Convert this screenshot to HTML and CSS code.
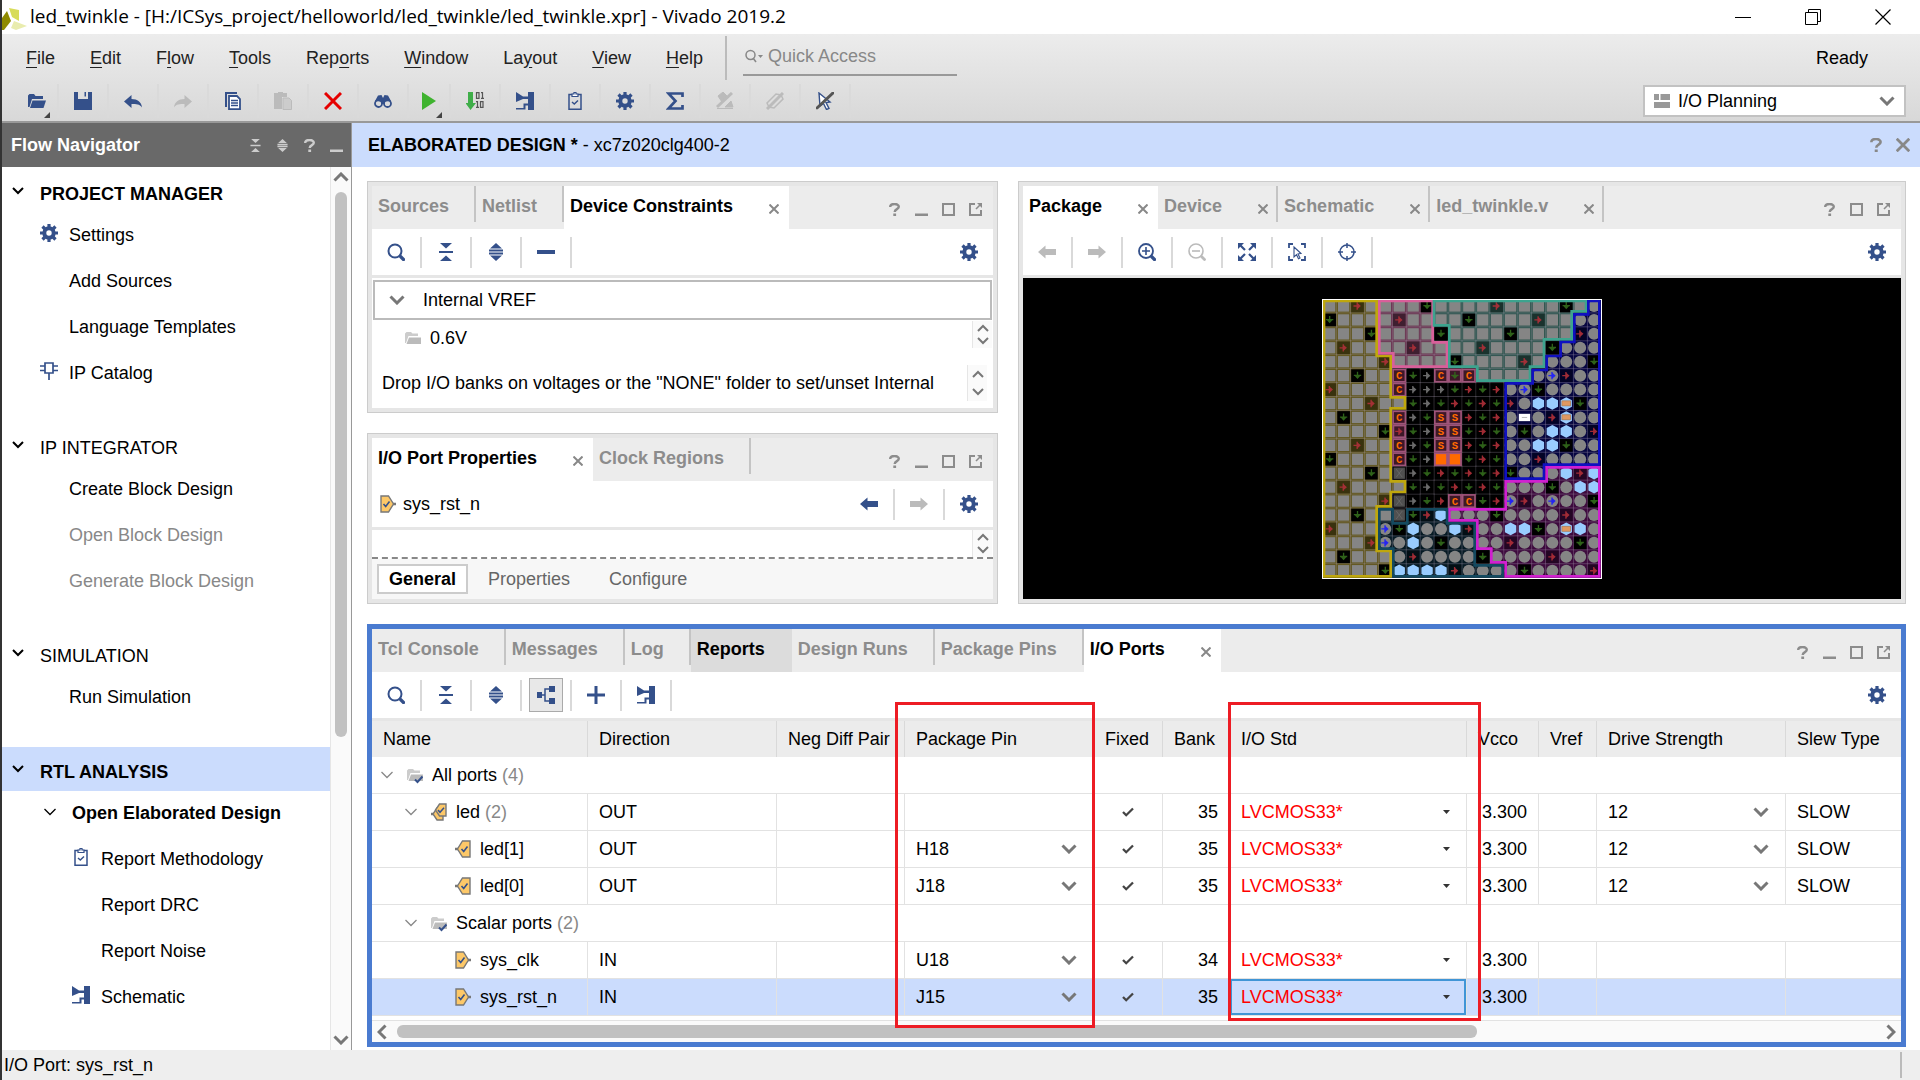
FILE: index.html
```html
<!DOCTYPE html>
<html lang="en">
<head>
    <meta charset="UTF-8">
    <meta name="viewport" content="width=device-width, initial-scale=1.0">
    <title>led_twinkle - Vivado 2019.2</title>
    <link rel="stylesheet" href="styles.css">
</head>
<body>
    <!-- icon sprite -->
    <svg class="sprite" aria-hidden="true">
        <symbol id="gear" viewBox="0 0 18 18"><circle cx="9" cy="9" r="4.7" fill="none" stroke="currentColor" stroke-width="4"/><path d="M9 0v4M9 14v4M0 9h4M14 9h4M2.5 2.5l3 3M12.5 12.5l3 3M2.5 15.5l3-3M12.5 5.5l3-3" stroke="currentColor" stroke-width="3.2"/></symbol>
        <symbol id="search" viewBox="0 0 18 18"><circle cx="8" cy="8" r="6.5" fill="none" stroke="currentColor" stroke-width="2"/><path d="M13.5 13.5l3 3" stroke="currentColor" stroke-width="3.2" stroke-linecap="round"/></symbol>
        <symbol id="collapse" viewBox="0 0 18 18"><path d="M3 0h12L9 5.5zM3 18h12l-6-5.5zM2 8h14v2H2z" fill="currentColor"/></symbol>
        <symbol id="expand" viewBox="0 0 18 18"><path d="M3 5.5h12L9 0zM3 12.5h12L9 18zM2 6.5h14v2H2zM2 9.5h14v2H2z" fill="currentColor"/></symbol>
        <symbol id="minus" viewBox="0 0 18 18"><path d="M0 7h18v4H0z" fill="currentColor"/></symbol>
        <symbol id="plus" viewBox="0 0 18 18"><path d="M7.500 0h3v7.500H18v3h-7.500V18h-3v-7.500H0v-3h7.500z" fill="currentColor"/></symbol>
        <symbol id="help" viewBox="0 0 13 13"><path d="M2.200 4C2.200 0 10.800 0 10.800 3.800 10.800 6.400 6.700 5.800 6.700 9M5.300 11.800h2.800" fill="none" stroke="currentColor" stroke-width="2.400"/></symbol>
        <symbol id="mini" viewBox="0 0 13 13"><path d="M0 10.500h13v2.500H0z" fill="currentColor"/></symbol>
        <symbol id="maxi" viewBox="0 0 13 13"><path d="M1 1h11v11H1z" fill="none" stroke="currentColor" stroke-width="2"/></symbol>
        <symbol id="float" viewBox="0 0 13 13"><path d="M6 1H1v11h11V7" fill="none" stroke="currentColor" stroke-width="2"/><path d="M7 6l4-4" stroke="currentColor" stroke-width="1.600"/><path d="M8 0h5v5z" fill="currentColor"/></symbol>
        <symbol id="close" viewBox="0 0 10 10"><path d="M.500 .500l9 9M9.500 .500l-9 9" stroke="currentColor" stroke-width="2"/></symbol>
        <symbol id="chev" viewBox="0 0 12 8"><path d="M1 1l5 5 5-5" fill="none" stroke="currentColor" stroke-width="2"/></symbol>
        <symbol id="chevBold" viewBox="0 0 16 10"><path d="M1.500 1.500L8 8l6.500-6.500" fill="none" stroke="currentColor" stroke-width="3"/></symbol>
        <symbol id="chevThin" viewBox="0 0 12 8"><path d="M.500 1L6 6.500 11.500 1" fill="none" stroke="currentColor" stroke-width="1.300"/></symbol>
        <symbol id="check" viewBox="0 0 12 10"><path d="M1 5l3.200 3.200L11 1.500" fill="none" stroke="currentColor" stroke-width="2.300"/></symbol>
        <symbol id="tri" viewBox="0 0 7 4"><path d="M0 0h7L3.500 4z" fill="currentColor"/></symbol>
        <symbol id="open" viewBox="0 0 18 18"><path d="M0 15V3.500L1.500 2H6l1.500 2H15v3H4L1.500 15z" fill="currentColor"/><path d="M4.500 8.500H18L15.500 16H2z" fill="currentColor"/></symbol>
        <symbol id="save" viewBox="0 0 18 18"><path d="M0 0h4v7h10V0h4v18H0zM10.500 0H12v4.500h-1.500z" fill="currentColor"/></symbol>
        <symbol id="undo" viewBox="0 0 18 18"><path d="M0 9.500L7.500 3v4c6 0 10 3 10.500 8.500-2.500-3.500-5.500-3.500-10.500-3.500v4z" fill="currentColor"/></symbol>
        <symbol id="redo" viewBox="0 0 18 18"><path d="M18 9.500L10.500 3v4C4.500 7 .500 10 0 15.500 2.500 12 5.500 12 10.500 12v4z" fill="currentColor"/></symbol>
        <symbol id="copy" viewBox="0 0 18 18"><path d="M1 0h12v2H3v13H1z" fill="currentColor"/><path d="M5 4h8l3 3v10.200H5z" fill="#fff" stroke="currentColor" stroke-width="1.800"/><path d="M7 8.500h7M7 11h7M7 13.500h7" stroke="currentColor" stroke-width="1.300"/></symbol>
        <symbol id="paste" viewBox="0 0 18 18"><path d="M0 1h4V0h5v1h4v4H8v12H0z" fill="currentColor"/><path d="M9 6h6l2.500 2.500v9H9z" fill="#ccc" stroke="currentColor"/></symbol>
        <symbol id="delete" viewBox="0 0 18 18"><path d="M1 1l16 16M17 1L1 17" stroke="#e60000" stroke-width="3"/></symbol>
        <symbol id="find" viewBox="0 0 18 18"><g fill="none" stroke="currentColor" stroke-width="1.800"><circle cx="4.500" cy="11.500" r="3.500"/><circle cx="13.500" cy="11.500" r="3.500"/></g><path d="M1 9l3-5.500 3.500-.500L9 6l1.500-3 3.500.500L17 9l-6 .500-.500 2.500h-3L7 9.500z" fill="currentColor"/></symbol>
        <symbol id="run" viewBox="0 0 18 18"><path d="M2 0l14 9L2 18z" fill="#3fb32f"/></symbol>
        <symbol id="bits" viewBox="0 0 18 18"><path d="M2 0h5v11h3L4.500 18-.500 11H2z" fill="#3fae49"/><path d="M10.500.700h2.500v5.600h-2.500zM15 .700h1.500v5.600M15 6.300h3M10 9.700h1.500v5.600M10 15.300h3M14.500 9.700H17v5.600h-2.500z" fill="none" stroke="#555" stroke-width="1.200"/></symbol>
        <symbol id="schem" viewBox="0 0 18 18"><path d="M0 0l7 4.500h5V0h6v18h-6v-4.500H9.500V17.500H0V16h7.500v-4.500H12V7H7L0 10z" fill="currentColor"/></symbol>
        <symbol id="clip" viewBox="0 0 18 18"><path d="M3 2.500h12v14.700H3z" fill="none" stroke="currentColor" stroke-width="1.500"/><path d="M6 3.500V2h2V.500h2V2h2v2.500H6z" fill="#fff" stroke="currentColor" stroke-width="1.200"/><path d="M6 10l2.300 2L12 8.500" fill="none" stroke="currentColor" stroke-width="1.500"/></symbol>
        <symbol id="sigma" viewBox="0 0 18 18"><path d="M16.500 5V1.500H2.500L9.500 9l-7 7.500h14V13" fill="none" stroke="currentColor" stroke-width="2.700"/></symbol>
        <symbol id="noMark" viewBox="0 0 18 18"><path d="M1 16.500h16M2 4l5-4 5 5-6 5zM9 15l6-6 2 6z" fill="currentColor" stroke="currentColor"/><path d="M1 15L16 1" stroke="currentColor" stroke-width="3"/></symbol>
        <symbol id="noRoute" viewBox="0 0 18 18"><path d="M1 11L10 2l5 1 2 4-9 9-5-1z" fill="none" stroke="currentColor" stroke-width="1.500"/><path d="M1 17L17 1M6 12l6-6" stroke="currentColor" stroke-width="3"/></symbol>
        <symbol id="noSelect" viewBox="0 0 18 18"><path d="M3 1l11 9-4 .500 3 6-2.500 1-3-6L4 14z" fill="#fff" stroke="#34508a" stroke-width="1.400"/><path d="M1 16L17 1" stroke="#555" stroke-width="3" stroke-linecap="round"/></symbol>
        <symbol id="ip" viewBox="0 0 18 18"><path d="M5 1h8v10H5zM0 4h5M0 8.500h5M13 4h5M13 8.500h5M9 11v7" fill="none" stroke="currentColor" stroke-width="1.700"/></symbol>
        <symbol id="tree" viewBox="0 0 18 18"><path d="M0 6h5v6H0zM12 0h6v6h-6zM12 12h6v6h-6z" fill="currentColor"/><path d="M5 9h3M12 3H8v12h4" fill="none" stroke="currentColor" stroke-width="1.500"/></symbol>
        <symbol id="back" viewBox="0 0 18 18"><path d="M0 9l7.500-6.500V6H18v6H7.500v3.500z" fill="currentColor"/></symbol>
        <symbol id="next" viewBox="0 0 18 18"><path d="M18 9l-7.500-6.500V6H0v6h10.500v3.500z" fill="currentColor"/></symbol>
        <symbol id="zoomIn" viewBox="0 0 18 18"><circle cx="8" cy="8" r="7" fill="none" stroke="currentColor" stroke-width="1.800"/><path d="M4 8h8M8 4v8" stroke="currentColor" stroke-width="1.600"/><path d="M13.500 13.500l3 3" stroke="currentColor" stroke-width="3.200" stroke-linecap="round"/></symbol>
        <symbol id="zoomOut" viewBox="0 0 18 18"><circle cx="8" cy="8" r="7" fill="none" stroke="currentColor" stroke-width="1.600"/><path d="M4 8h8" stroke="currentColor" stroke-width="1.600"/><path d="M13.500 13.500l3 3" stroke="currentColor" stroke-width="2.800" stroke-linecap="round"/></symbol>
        <symbol id="fit" viewBox="0 0 18 18"><path d="M0 0h6L0 6zM18 0v6l-6-6zM0 18v-6l6 6zM18 18h-6l6-6z" fill="currentColor"/><path d="M2 2l5 5M16 2l-5 5M2 16l5-5M16 16l-5-5" stroke="currentColor" stroke-width="2.200"/></symbol>
        <symbol id="fitSel" viewBox="0 0 18 18"><path d="M1 5V1h4M13 1h4v4M17 13v4h-4M5 17H1v-4" fill="none" stroke="currentColor" stroke-width="1.800"/><path d="M6 4l7 6.500-3 .500 2 4-1.500.700-2-4L6 14z" fill="#fff" stroke="currentColor" stroke-width="1.100"/></symbol>
        <symbol id="target" viewBox="0 0 18 18"><circle cx="9" cy="9" r="7" fill="none" stroke="currentColor" stroke-width="1.500"/><path d="M9 0v5M9 13v5M0 9h5M13 9h5" stroke="currentColor" stroke-width="1.500"/></symbol>
        <symbol id="folder" viewBox="0 0 16 16"><path d="M0 13V3.500L1.500 2H6l1.500 1.500H13V6H3.500L1 13z" fill="#ccc"/><path d="M4 7.500h12V14H1.500z" fill="#bbb"/></symbol>
        <symbol id="folderOk" viewBox="0 0 16 16"><path d="M0 13V3.500L1.500 2H6l1.500 1.500H13V6H3.500L1 13z" fill="#ccc"/><path d="M4 7.500h12V14H1.500z" fill="#bbb"/><path d="M8 12.500l2.500 2.500L15.500 9.500" fill="none" stroke="#34508a" stroke-width="2"/></symbol>
        <symbol id="portIn" viewBox="0 0 16 18"><path d="M1 1h7.500l5 8-5 8H1z" fill="#fdc868" stroke="#777" stroke-width="1.400"/><path d="M13 9h3" stroke="#777" stroke-width="2.500"/><path d="M3.500 9l2.200 2.500L9.500 6.500" fill="none" stroke="#34508a" stroke-width="1.600"/></symbol>
        <symbol id="portOut" viewBox="0 0 16 18"><path d="M15 1H7.500l-5 8 5 8H15z" fill="#fdc868" stroke="#777" stroke-width="1.400"/><path d="M3 9H0" stroke="#777" stroke-width="2.500"/><path d="M6.500 9l2.200 2.500L12.500 6.500" fill="none" stroke="#34508a" stroke-width="1.600"/></symbol>
        <symbol id="bus" viewBox="0 0 16 18"><path d="M12 17H6l-4-6 4-6h6z" fill="#fdc868" stroke="#777" stroke-width="1.400"/><path d="M15 1H8.500L4.500 7l4 6H15z" fill="#fdc868" stroke="#777" stroke-width="1.400"/><path d="M2.500 11H0" stroke="#777" stroke-width="2.500"/><path d="M7 7l2 2.300L13 4.800" fill="none" stroke="#34508a" stroke-width="1.500"/></symbol>
    </svg>

    <header class="titleBar">
        <svg class="logo" viewBox="0 0 26 28"><path d="M7 5l10 2v11L10 14z" fill="#d8dc5a"/><path d="M0 15l5-7 4 10-7 9H0z" fill="#8f8a00"/><path d="M12 18l13 5-11 4-5-2z" fill="#e9ecae"/></svg>
        <h1>led_twinkle - [H:/ICSys_project/helloworld/led_twinkle/led_twinkle.xpr] - Vivado 2019.2</h1>
        <div class="winButtons">
            <button aria-label="Minimize"><svg viewBox="0 0 16 16"><path d="M0 8.500h16" stroke="#000"/></svg></button>
            <button aria-label="Restore"><svg viewBox="0 0 16 16"><path d="M.500 3.500h12v12H.500zM3.500 3V.500h12v12H13" fill="none" stroke="#000"/></svg></button>
            <button aria-label="Close"><svg viewBox="0 0 16 16"><path d="M.500 .500l15 15M15.500 .500l-15 15" stroke="#000" stroke-width="1.200"/></svg></button>
        </div>
    </header>

    <div class="topBar">
        <div class="menuRow">
            <nav class="menu">
                <a href="#"><u>F</u>ile</a>
                <a href="#"><u>E</u>dit</a>
                <a href="#">F<u>l</u>ow</a>
                <a href="#"><u>T</u>ools</a>
                <a href="#">Rep<u>o</u>rts</a>
                <a href="#"><u>W</u>indow</a>
                <a href="#">La<u>y</u>out</a>
                <a href="#"><u>V</u>iew</a>
                <a href="#"><u>H</u>elp</a>
            </nav>
            <label class="quick">
                <svg viewBox="0 0 18 14"><circle cx="5.500" cy="6" r="4.500" fill="none" stroke="currentColor" stroke-width="1.500"/><path d="M8 9l3 4" stroke="currentColor" stroke-width="1.500"/><path d="M13 6h5l-2.500 3z" fill="currentColor"/></svg>
                <input type="text" placeholder="Quick Access" aria-label="Quick Access">
            </label>
            <span class="ready">Ready</span>
        </div>
        <div class="mainTools">
            <button class="first drop" aria-label="Open"><svg><use href="#open"/></svg></button>
            <button aria-label="Save"><svg><use href="#save"/></svg></button>
            <button aria-label="Undo"><svg><use href="#undo"/></svg></button>
            <button class="off" aria-label="Redo"><svg><use href="#redo"/></svg></button>
            <button aria-label="Copy"><svg><use href="#copy"/></svg></button>
            <button class="off" aria-label="Paste"><svg><use href="#paste"/></svg></button>
            <button aria-label="Delete"><svg><use href="#delete"/></svg></button>
            <button aria-label="Find"><svg><use href="#find"/></svg></button>
            <button class="run drop" aria-label="Run"><svg><use href="#run"/></svg></button>
            <button aria-label="Generate Bitstream"><svg><use href="#bits"/></svg></button>
            <button aria-label="Schematic"><svg><use href="#schem"/></svg></button>
            <button aria-label="Report"><svg><use href="#clip"/></svg></button>
            <button aria-label="Settings"><svg><use href="#gear"/></svg></button>
            <button aria-label="Summary"><svg><use href="#sigma"/></svg></button>
            <button class="off" aria-label="Clear marks"><svg><use href="#noMark"/></svg></button>
            <button class="off" aria-label="Clear routes"><svg><use href="#noRoute"/></svg></button>
            <button aria-label="Unselect"><svg><use href="#noSelect"/></svg></button>
            <label class="layoutPick">
                <svg class="layoutIcon" viewBox="0 0 16 14"><path d="M0 0h5v6H0zM6.500 0H16v6H6.500zM0 8h16v6H0z" fill="#999"/></svg>
                <select aria-label="Layout"><option>I/O Planning</option></select>
                <svg class="arrow"><use href="#chevBold"/></svg>
            </label>
        </div>
    </div>

    <div class="work">
        <aside class="navigator">
            <div class="navHead">
                <h2>Flow Navigator</h2>
                <button aria-label="Collapse all"><svg><use href="#collapse"/></svg></button>
                <button aria-label="Expand all"><svg><use href="#expand"/></svg></button>
                <button aria-label="Help"><svg><use href="#help"/></svg></button>
                <button aria-label="Minimize"><svg><use href="#mini"/></svg></button>
            </div>
            <div class="navBody">
                <div class="navList">
                    <h3 class="bold"><svg><use href="#chev"/></svg>PROJECT MANAGER</h3>
                    <ul>
                        <li><svg><use href="#gear"/></svg><a href="#">Settings</a></li>
                        <li><a href="#">Add Sources</a></li>
                        <li><a href="#">Language Templates</a></li>
                        <li><svg><use href="#ip"/></svg><a href="#">IP Catalog</a></li>
                    </ul>
                    <h3><svg><use href="#chev"/></svg>IP INTEGRATOR</h3>
                    <ul>
                        <li><a href="#">Create Block Design</a></li>
                        <li class="off"><a href="#">Open Block Design</a></li>
                        <li class="off"><a href="#">Generate Block Design</a></li>
                    </ul>
                    <h3><svg><use href="#chev"/></svg>SIMULATION</h3>
                    <ul>
                        <li><a href="#">Run Simulation</a></li>
                    </ul>
                    <h3 class="bold current"><svg><use href="#chev"/></svg>RTL ANALYSIS</h3>
                    <ul class="deep">
                        <li class="openDesign"><svg><use href="#chevThin"/></svg><a href="#">Open Elaborated Design</a></li>
                        <li><svg><use href="#clip"/></svg><a href="#">Report Methodology</a></li>
                        <li><a href="#">Report DRC</a></li>
                        <li><a href="#">Report Noise</a></li>
                        <li><svg><use href="#schem"/></svg><a href="#">Schematic</a></li>
                    </ul>
                </div>
                <div class="vScroll">
                    <svg class="up"><use href="#chevBold"/></svg>
                    <div class="thumb"></div>
                    <svg><use href="#chevBold"/></svg>
                </div>
            </div>
        </aside>

        <main>
            <div class="designHead">
                <h2><b>ELABORATED DESIGN *</b> - xc7z020clg400-2</h2>
                <button aria-label="Help"><svg><use href="#help"/></svg></button>
                <button aria-label="Close"><svg><use href="#close"/></svg></button>
            </div>

            <div class="panels">
                <div class="leftCol">
                    <section class="panel constraints">
                        <div class="tabs">
                            <button class="tab">Sources</button>
                            <button class="tab">Netlist</button>
                            <button class="tab active">Device Constraints<svg><use href="#close"/></svg></button>
                            <div class="panelButtons">
                                <button aria-label="Help"><svg><use href="#help"/></svg></button>
                                <button aria-label="Minimize"><svg><use href="#mini"/></svg></button>
                                <button aria-label="Maximize"><svg><use href="#maxi"/></svg></button>
                                <button aria-label="Float"><svg><use href="#float"/></svg></button>
                            </div>
                        </div>
                        <div class="tools">
                            <button aria-label="Search"><svg><use href="#search"/></svg></button>
                            <button aria-label="Collapse all"><svg><use href="#collapse"/></svg></button>
                            <button aria-label="Expand all"><svg><use href="#expand"/></svg></button>
                            <button aria-label="Remove"><svg><use href="#minus"/></svg></button>
                            <button class="gear" aria-label="Settings"><svg><use href="#gear"/></svg></button>
                        </div>
                        <button class="vref"><svg><use href="#chevBold"/></svg>Internal VREF</button>
                        <div class="volt">
                            <svg class="folder"><use href="#folder"/></svg>
                            <span>0.6V</span>
                            <div class="spin"><svg class="up"><use href="#chev"/></svg><svg><use href="#chev"/></svg></div>
                        </div>
                        <div class="hint">
                            <p>Drop I/O banks on voltages or the "NONE" folder to set/unset Internal</p>
                            <div class="spin"><svg class="up"><use href="#chev"/></svg><svg><use href="#chev"/></svg></div>
                        </div>
                    </section>

                    <section class="panel props">
                        <div class="tabs">
                            <button class="tab active">I/O Port Properties<svg><use href="#close"/></svg></button>
                            <button class="tab">Clock Regions</button>
                            <div class="panelButtons">
                                <button aria-label="Help"><svg><use href="#help"/></svg></button>
                                <button aria-label="Minimize"><svg><use href="#mini"/></svg></button>
                                <button aria-label="Maximize"><svg><use href="#maxi"/></svg></button>
                                <button aria-label="Float"><svg><use href="#float"/></svg></button>
                            </div>
                        </div>
                        <div class="tools">
                            <span class="portName"><svg><use href="#portIn"/></svg>sys_rst_n</span>
                            <button aria-label="Back"><svg><use href="#back"/></svg></button>
                            <button class="off" aria-label="Next"><svg><use href="#next"/></svg></button>
                            <button class="gear" aria-label="Settings"><svg><use href="#gear"/></svg></button>
                        </div>
                        <div class="propsBody">
                            <div class="spin"><svg class="up"><use href="#chev"/></svg><svg><use href="#chev"/></svg></div>
                        </div>
                        <div class="subTabs">
                            <button class="active">General</button>
                            <button>Properties</button>
                            <button>Configure</button>
                        </div>
                    </section>
                </div>

                <section class="panel package">
                    <div class="tabs">
                        <button class="tab active">Package<svg><use href="#close"/></svg></button>
                        <button class="tab">Device<svg><use href="#close"/></svg></button>
                        <button class="tab">Schematic<svg><use href="#close"/></svg></button>
                        <button class="tab">led_twinkle.v<svg><use href="#close"/></svg></button>
                        <div class="panelButtons">
                            <button aria-label="Help"><svg><use href="#help"/></svg></button>
                            <button aria-label="Maximize"><svg><use href="#maxi"/></svg></button>
                            <button aria-label="Float"><svg><use href="#float"/></svg></button>
                        </div>
                    </div>
                    <div class="tools">
                        <button class="off" aria-label="Back"><svg><use href="#back"/></svg></button>
                        <button class="off" aria-label="Next"><svg><use href="#next"/></svg></button>
                        <button aria-label="Zoom in"><svg><use href="#zoomIn"/></svg></button>
                        <button class="off" aria-label="Zoom out"><svg><use href="#zoomOut"/></svg></button>
                        <button aria-label="Zoom fit"><svg><use href="#fit"/></svg></button>
                        <button aria-label="Zoom to selection"><svg><use href="#fitSel"/></svg></button>
                        <button aria-label="Center"><svg><use href="#target"/></svg></button>
                        <button class="gear" aria-label="Settings"><svg><use href="#gear"/></svg></button>
                    </div>
                    <div class="canvas">
                        <svg id="chip" viewBox="36 27 840 840" role="img" aria-label="Package view"></svg>
                    </div>
                </section>

                <section class="panel ports">
                    <div class="tabs">
                        <button class="tab">Tcl Console</button>
                        <button class="tab">Messages</button>
                        <button class="tab">Log</button>
                        <button class="tab hover">Reports</button>
                        <button class="tab">Design Runs</button>
                        <button class="tab">Package Pins</button>
                        <button class="tab active">I/O Ports<svg><use href="#close"/></svg></button>
                        <div class="panelButtons">
                            <button aria-label="Help"><svg><use href="#help"/></svg></button>
                            <button aria-label="Minimize"><svg><use href="#mini"/></svg></button>
                            <button aria-label="Maximize"><svg><use href="#maxi"/></svg></button>
                            <button aria-label="Float"><svg><use href="#float"/></svg></button>
                        </div>
                    </div>
                    <div class="tools">
                        <button aria-label="Search"><svg><use href="#search"/></svg></button>
                        <button aria-label="Collapse all"><svg><use href="#collapse"/></svg></button>
                        <button aria-label="Expand all"><svg><use href="#expand"/></svg></button>
                        <button class="pressed" aria-label="Group by interface"><svg><use href="#tree"/></svg></button>
                        <button aria-label="Add"><svg><use href="#plus"/></svg></button>
                        <button aria-label="Schematic"><svg><use href="#schem"/></svg></button>
                        <button class="gear" aria-label="Settings"><svg><use href="#gear"/></svg></button>
                    </div>
                    <div class="tableWrap">
                        <table>
                            <colgroup>
                                <col class="cName"><col class="cDir"><col class="cNeg"><col class="cPin"><col class="cFixed"><col class="cBank"><col class="cStd"><col class="cVcco"><col class="cVref"><col class="cDrive"><col>
                            </colgroup>
                            <thead>
                                <tr><th>Name</th><th>Direction</th><th>Neg Diff Pair</th><th>Package Pin</th><th>Fixed</th><th>Bank</th><th>I/O Std</th><th>Vcco</th><th>Vref</th><th>Drive Strength</th><th>Slew Type</th></tr>
                            </thead>
                            <tbody>
                                <tr class="group">
                                    <td colspan="11"><div class="node"><svg class="twist"><use href="#chevThin"/></svg><svg class="kind"><use href="#folderOk"/></svg>All ports <i>(4)</i></div></td>
                                </tr>
                                <tr>
                                    <td><div class="node lvl1"><svg class="twist"><use href="#chevThin"/></svg><svg class="kind"><use href="#bus"/></svg>led <i>(2)</i></div></td>
                                    <td>OUT</td><td></td><td></td>
                                    <td class="fix"><svg><use href="#check"/></svg></td>
                                    <td class="num">35</td>
                                    <td class="std"><label class="pick"><select aria-label="I/O Std led"><option>LVCMOS33*</option></select><svg><use href="#tri"/></svg></label></td>
                                    <td class="num">3.300</td><td></td>
                                    <td><label class="pick"><select aria-label="Drive Strength led"><option>12</option></select><svg><use href="#chevBold"/></svg></label></td>
                                    <td>SLOW</td>
                                </tr>
                                <tr>
                                    <td><div class="node lvl2"><svg class="kind"><use href="#portOut"/></svg>led[1]</div></td>
                                    <td>OUT</td><td></td>
                                    <td><label class="pick"><select aria-label="Package Pin led[1]"><option>H18</option></select><svg><use href="#chevBold"/></svg></label></td>
                                    <td class="fix"><svg><use href="#check"/></svg></td>
                                    <td class="num">35</td>
                                    <td class="std"><label class="pick"><select aria-label="I/O Std led[1]"><option>LVCMOS33*</option></select><svg><use href="#tri"/></svg></label></td>
                                    <td class="num">3.300</td><td></td>
                                    <td><label class="pick"><select aria-label="Drive Strength led[1]"><option>12</option></select><svg><use href="#chevBold"/></svg></label></td>
                                    <td>SLOW</td>
                                </tr>
                                <tr>
                                    <td><div class="node lvl2"><svg class="kind"><use href="#portOut"/></svg>led[0]</div></td>
                                    <td>OUT</td><td></td>
                                    <td><label class="pick"><select aria-label="Package Pin led[0]"><option>J18</option></select><svg><use href="#chevBold"/></svg></label></td>
                                    <td class="fix"><svg><use href="#check"/></svg></td>
                                    <td class="num">35</td>
                                    <td class="std"><label class="pick"><select aria-label="I/O Std led[0]"><option>LVCMOS33*</option></select><svg><use href="#tri"/></svg></label></td>
                                    <td class="num">3.300</td><td></td>
                                    <td><label class="pick"><select aria-label="Drive Strength led[0]"><option>12</option></select><svg><use href="#chevBold"/></svg></label></td>
                                    <td>SLOW</td>
                                </tr>
                                <tr class="group">
                                    <td colspan="11"><div class="node lvl1"><svg class="twist"><use href="#chevThin"/></svg><svg class="kind"><use href="#folderOk"/></svg>Scalar ports <i>(2)</i></div></td>
                                </tr>
                                <tr>
                                    <td><div class="node lvl2"><svg class="kind"><use href="#portIn"/></svg>sys_clk</div></td>
                                    <td>IN</td><td></td>
                                    <td><label class="pick"><select aria-label="Package Pin sys_clk"><option>U18</option></select><svg><use href="#chevBold"/></svg></label></td>
                                    <td class="fix"><svg><use href="#check"/></svg></td>
                                    <td class="num">34</td>
                                    <td class="std"><label class="pick"><select aria-label="I/O Std sys_clk"><option>LVCMOS33*</option></select><svg><use href="#tri"/></svg></label></td>
                                    <td class="num">3.300</td><td></td><td></td><td></td>
                                </tr>
                                <tr class="selected">
                                    <td><div class="node lvl2"><svg class="kind"><use href="#portIn"/></svg>sys_rst_n</div></td>
                                    <td>IN</td><td></td>
                                    <td><label class="pick"><select aria-label="Package Pin sys_rst_n"><option>J15</option></select><svg><use href="#chevBold"/></svg></label></td>
                                    <td class="fix"><svg><use href="#check"/></svg></td>
                                    <td class="num">35</td>
                                    <td class="std focus"><label class="pick"><select aria-label="I/O Std sys_rst_n"><option>LVCMOS33*</option></select><svg><use href="#tri"/></svg></label></td>
                                    <td class="num">3.300</td><td></td><td></td><td></td>
                                </tr>
                            </tbody>
                        </table>
                        <div class="mark markPin"></div>
                        <div class="mark markStd"></div>
                    </div>
                    <div class="hScroll">
                        <svg class="left" viewBox="0 0 10 16"><path d="M8.500 1.500L2 8l6.500 6.500" fill="none" stroke="currentColor" stroke-width="3"/></svg>
                        <div class="track"><div class="thumb"></div></div>
                        <svg viewBox="0 0 10 16"><path d="M1.500 1.500L8 8l-6.500 6.500" fill="none" stroke="currentColor" stroke-width="3"/></svg>
                    </div>
                </section>
            </div>
        </main>
    </div>

    <footer class="status"><span>I/O Port: sys_rst_n</span></footer>

    <script src="package.js"></script>
</body>
</html>
```
FILE: styles.css
```css
*{
    box-sizing: border-box;
}
body{
    margin: 0;
    min-height: 100vh;
    display: flex;
    flex-direction: column;
    border-left: 2px solid #333;
    background: white;
    color: black;
    font-family: "Liberation Sans", Arial, sans-serif;
    font-size: 18px;
}
h1, h2, h3, p, ul{
    margin: 0;
    padding: 0;
    font-size: 18px;
    font-weight: normal;
}
ul{
    list-style: none;
}
a{
    color: inherit;
    text-decoration: none;
}
button, select, input{
    font: inherit;
    color: inherit;
    border: 0;
    padding: 0;
    margin: 0;
    background: none;
}
button{
    display: flex;
    align-items: center;
    justify-content: center;
}
svg{
    flex: none;
    display: block;
}
select{
    appearance: none;
    outline: none;
}
.sprite{
    position: absolute;
    width: 0;
    height: 0;
}
.up{
    transform: rotate(180deg);
}

/* title */
.titleBar{
    display: flex;
    align-items: center;
    height: 34px;
}
.logo{
    width: 26px;
    height: 28px;
}
.titleBar h1{
    font-family: "Open Sans", sans-serif;
    font-size: 19px;
    line-height: 28px;
    margin-left: 2px;
    height: 30px;
}
.winButtons{
    display: flex;
    margin-left: auto;
    padding-right: 2px;
}
.winButtons button{
    width: 70px;
    height: 32px;
}
.winButtons svg{
    width: 16px;
    height: 16px;
}

/* menu and main toolbar */
.topBar{
    background: linear-gradient(#ececec, #d8d8d8);
    border-bottom: 2px solid #999;
}
.menuRow{
    display: flex;
    align-items: center;
    height: 48px;
}
.menu{
    display: flex;
    align-items: center;
    gap: 35px;
    height: 44px;
    padding: 0 22px 0 24px;
    border-right: 2px solid #bbb;
    color: #222;
}
.menu u{
    text-underline-offset: 3px;
}
.quick{
    display: flex;
    align-items: center;
    gap: 5px;
    width: 214px;
    height: 38px;
    margin: 0 0 2px 16px;
    padding: 0 2px;
    border-bottom: 2px solid #999;
    color: #888;
}
.quick svg{
    width: 18px;
    height: 14px;
}
.quick input{
    width: 170px;
    outline: none;
}
.quick input::placeholder{
    color: #888;
}
.ready{
    margin-left: auto;
    padding-right: 52px;
}
.mainTools{
    display: flex;
    align-items: center;
    height: 39px;
    padding: 0 14px 2px 0;
    color: #34508a;
}
.mainTools button{
    position: relative;
    width: 50px;
    height: 34px;
    border-right: 2px solid #dadada;
}
.mainTools .first{
    width: 57px;
    padding-left: 14px;
}
.mainTools .run{
    width: 42px;
}
.mainTools svg{
    width: 18px;
    height: 18px;
}
.mainTools .off, .tools .off{
    color: #bbb;
}
.mainTools .drop::after{
    content: "";
    position: absolute;
    right: 7px;
    bottom: 0;
    border: 3px solid transparent;
    border-right-color: #444;
    border-bottom-color: #444;
}
.layoutPick{
    display: flex;
    align-items: center;
    gap: 8px;
    width: 263px;
    height: 32px;
    margin-left: auto;
    padding: 0 9px;
    border: 2px solid #c2c2c2;
    background: white;
    color: black;
}
.layoutPick select{
    flex: 1;
}
.layoutPick .layoutIcon{
    width: 16px;
    height: 14px;
}
.layoutPick .arrow{
    width: 16px;
    height: 10px;
    color: #777;
}

/* flow navigator */
.work{
    flex: 1;
    display: flex;
}
.navigator{
    flex: none;
    width: 350px;
    display: flex;
    flex-direction: column;
    border-right: 1px solid #999;
}
.navHead{
    display: flex;
    align-items: center;
    height: 44px;
    padding: 0 1px 0 9px;
    background: #696969;
    color: #ccc;
}
.navHead h2{
    flex: 1;
    color: white;
    font-weight: bold;
}
.navHead button{
    width: 27px;
    height: 30px;
}
.navHead svg{
    width: 13px;
    height: 13px;
}
.navBody{
    flex: 1;
    display: flex;
}
.navList{
    flex: 1;
    padding-top: 2px;
}
.navList h3{
    display: flex;
    align-items: center;
    height: 44px;
    padding: 6px 0 0 10px;
    gap: 16px;
}
.navList h3 svg{
    width: 12px;
    height: 8px;
    margin-bottom: 6px;
}
.navList .bold{
    font-weight: bold;
}
.navList .current{
    background: #cbdcfd;
}
.navList ul{
    padding-bottom: 26px;
}
.navList ul.deep{
    padding-bottom: 0;
}
.navList li{
    display: flex;
    align-items: center;
    justify-content: flex-end;
    height: 46px;
    padding-bottom: 2px;
}
.navList li svg{
    width: 18px;
    height: 18px;
    margin: 0 11px 5px 0;
    color: #34508a;
}
.navList li a{
    width: 261px;
}
.navList .deep a{
    width: 229px;
}
.navList .off{
    color: #888;
}
.navList .openDesign{
    font-weight: bold;
}
.navList .openDesign a{
    width: 258px;
}
.navList .openDesign svg{
    width: 12px;
    height: 8px;
    margin: 0 16px 2px 0;
    color: black;
}
.vScroll{
    width: 21px;
    display: flex;
    flex-direction: column;
    align-items: center;
    padding: 5px 0;
    border-left: 1px solid #e6e6e6;
    background: #fafafa;
    color: #777;
}
.vScroll svg{
    width: 16px;
    height: 10px;
}
.vScroll .thumb{
    width: 12px;
    height: 545px;
    margin: 10px 0 auto;
    border-radius: 6px;
    background: #c1c1c1;
}

/* work area */
main{
    flex: 1;
    display: flex;
    flex-direction: column;
    min-width: 0;
}
.designHead{
    display: flex;
    align-items: center;
    height: 44px;
    padding: 0 4px 0 16px;
    background: #cbdcfd;
    color: #888;
}
.designHead h2{
    flex: 1;
    color: black;
}
.designHead button{
    width: 27px;
    height: 30px;
}
.designHead svg{
    width: 14px;
    height: 14px;
}
.panels{
    flex: 1;
    display: grid;
    grid-template-columns: 631fr 888fr;
    grid-template-rows: auto 1fr;
    gap: 20px;
    padding: 14px 14px 3px 15px;
}
.leftCol{
    display: flex;
    flex-direction: column;
    gap: 20px;
}
.panel{
    min-width: 0;
    display: flex;
    flex-direction: column;
    border: 1px solid #ccc;
    box-shadow: inset 0 0 0 4px #e6e6e6;
    padding: 4px;
}
.tabs{
    display: flex;
    height: 43px;
    background: #ececec;
}
.tab{
    padding: 0 27px 3px 6px;
    color: #8c8c8c;
    font-weight: bold;
    white-space: nowrap;
    background: linear-gradient(#c4c4c4, #c4c4c4) right top / 2px 36px no-repeat;
}
.tab:has(svg){
    padding-right: 10px;
}
.tab svg{
    width: 10px;
    height: 10px;
    margin: 5px 0 0 36px;
    color: #888;
}
.tab.active{
    background: white;
    color: black;
}
.tab.hover{
    background: #dcdcdc;
    color: black;
}
.panelButtons{
    display: flex;
    margin-left: auto;
    padding: 4px 4px 0 0;
    color: #8c8c8c;
}
.panelButtons button{
    width: 27px;
    height: 39px;
}
.panelButtons svg{
    width: 13px;
    height: 13px;
}
.tools{
    display: flex;
    align-items: center;
    height: 49px;
    border-bottom: 3px solid #e6e6e6;
    color: #34508a;
}
.tools button{
    width: 50px;
    height: 31px;
    border-right: 2px solid #d9d9d9;
}
.tools .gear{
    width: 48px;
    margin-left: auto;
    border: 0;
}
.tools svg{
    width: 18px;
    height: 18px;
}
.tools .pressed svg{
    width: 34px;
    height: 34px;
    padding: 7px;
    border: 1px solid #aaa;
    background: #e8e8e8;
}
.spin{
    display: flex;
    flex-direction: column;
    align-items: center;
    justify-content: space-around;
    width: 20px;
    background: #fafafa;
    border-left: 1px solid #e6e6e6;
    color: #777;
}
.spin svg{
    width: 12px;
    height: 8px;
}

/* device constraints */
.vref{
    justify-content: flex-start;
    gap: 18px;
    height: 40px;
    margin: 2px 1px 1px;
    padding: 0 14px;
    border: 2px solid #bbb;
}
.vref svg{
    width: 16px;
    height: 10px;
    color: #777;
}
.volt{
    display: flex;
    align-items: center;
    gap: 9px;
    height: 34px;
    padding: 0 1px 0 33px;
}
.volt svg.folder{
    width: 16px;
    height: 16px;
}
.volt .spin{
    align-self: flex-start;
    margin-left: auto;
    height: 27px;
}
.hint{
    display: flex;
    align-items: center;
    height: 53px;
    padding: 2px 6px 0 10px;
}
.hint p{
    flex: 1;
    padding-top: 2px;
    white-space: nowrap;
    overflow: hidden;
}
.hint .spin{
    height: 36px;
}

/* port properties */
.portName{
    flex: 1;
    display: flex;
    align-items: center;
    gap: 7px;
    padding-left: 8px;
    color: black;
}
.tools .portName svg{
    width: 16px;
}
.propsBody{
    display: flex;
    justify-content: flex-end;
    height: 29px;
    padding-right: 1px;
    border-bottom: 2px dashed #888;
}
.subTabs{
    display: flex;
    align-items: center;
    height: 40px;
    padding-left: 5px;
    background: #f7f7f7;
    color: #666;
}
.subTabs button{
    height: 30px;
    padding: 0 10px;
    margin-right: 19px;
}
.subTabs .active{
    margin-right: 10px;
    border: 2px solid #ccc;
    background: white;
    color: black;
    font-weight: bold;
}

/* package view */
.canvas{
    flex: 1;
    display: flex;
    justify-content: center;
    align-items: center;
    background: black;
}
#chip{
    width: 280px;
    height: 280px;
}
#chip text{
    font: bold 32px "Liberation Mono", monospace;
    fill: #ff6a00;
    text-anchor: middle;
}

/* i/o ports */
.ports{
    grid-column: 1 / 3;
    border: 5px solid #4a7bd0;
    box-shadow: none;
    padding: 0;
}
.tableWrap{
    position: relative;
}
table{
    width: 100%;
    table-layout: fixed;
    border-collapse: separate;
    border-spacing: 0;
}
.cName{ width: 216px; }
.cDir{ width: 189px; }
.cNeg{ width: 128px; }
.cPin{ width: 189px; }
.cFixed{ width: 69px; }
.cBank{ width: 67px; }
.cStd{ width: 237px; }
.cVcco{ width: 72px; }
.cVref{ width: 58px; }
.cDrive{ width: 189px; }
th{
    height: 36px;
    padding: 0 0 0 11px;
    text-align: left;
    font-weight: normal;
    white-space: nowrap;
    background: #ececec;
    border-right: 1px solid #d9d9d9;
}
td{
    height: 37px;
    padding: 0 0 0 11px;
    border-right: 1px solid #e2e2e2;
    border-bottom: 1px solid #e2e2e2;
}
th:last-child, td:last-child{
    border-right: 0;
}
td:first-child{
    padding-left: 9px;
}
.num{
    padding: 0 11px 0 0;
    text-align: right;
}
.fix svg{
    width: 12px;
    height: 10px;
    margin-left: 17px;
    color: #444;
}
.node{
    display: flex;
    align-items: center;
    white-space: pre;
}
.node i{
    font-style: normal;
    color: #888;
}
.lvl1{ padding-left: 24px; }
.lvl2{ padding-left: 74px; }
.twist{
    width: 12px;
    height: 8px;
    margin-right: 14px;
    color: #888;
}
.kind{
    width: 16px;
    height: 18px;
    margin-right: 9px;
}
.pick{
    display: flex;
    align-items: center;
    padding-right: 16px;
}
.pick select{
    flex: 1;
    min-width: 0;
}
.pick svg{
    width: 16px;
    height: 10px;
    color: #777;
}
.std{
    color: red;
}
.std .pick svg{
    width: 7px;
    height: 4px;
    color: #333;
}
.selected{
    background: #cbdcfd;
}
.focus{
    box-shadow: inset 0 0 0 2px #4095d6;
}
.mark{
    position: absolute;
    top: -19px;
    border: 3px solid #ed1c24;
    pointer-events: none;
}
.markPin{
    left: 523px;
    width: 200px;
    height: 326px;
}
.markStd{
    left: 856px;
    width: 253px;
    height: 319px;
}
.hScroll{
    display: flex;
    align-items: center;
    height: 22px;
    margin-top: auto;
    padding: 0 5px;
    border-top: 1px solid #e2e2e2;
    background: #fafafa;
    color: #777;
}
.hScroll svg{
    width: 10px;
    height: 16px;
}
.hScroll .track{
    flex: 1;
    padding: 0 10px;
}
.hScroll .thumb{
    width: 73%;
    height: 13px;
    border-radius: 6px;
    background: #c1c1c1;
}

.status{
    display: flex;
    align-items: center;
    height: 30px;
    padding: 0 18px 0 2px;
    background: #eee;
}
.status span{
    flex: 1;
    border-right: 2px solid #bbb;
    line-height: 26px;
}
```
FILE: package.js
```js
// g square pin, o round pin, w/R clock capable, G ground, V power, K unused power,
// B bank power, C/S config and system pins, F filled, X not connected, W selected
const pins = [
    "ggVggggGggggVggggGgo",
    "GggggVggggGggggVggoo",
    "gggGggggGggggGggggVo",
    "gVggggVggggVggggGooo",
    "ggggVggggGggggVgoooG",
    "ggGggCGKCLCggggoBVoo",
    "VggggCKKKGVGVoBGoooo",
    "gggVggGKGVGVGVowwRGo",
    "gGgggCKGSSVGVoWoVRoo",
    "ggggGPGKSSGVGoGowwoV",
    "ggVggCKGSSVGVoowwGoo",
    "GggggCGKFFGVGooVoooo",
    "gggGgXKGVGVGVGooowVw",
    "gVggggGKGVGVGoooGoww",
    "ggggVXKGVCCGVBVoBooG",
    "ggGggXGVwoooGooooVoo",
    "VgggBGwoowVoowwGoRwo",
    "gggVBowoGooooVooooGo",
    "gGgggoVooooGooooVooo",
    "ggggGwwwwVooooGooooV"
];

const banks = [
    ["#bfa70d", "#5f5418", "42,33 200,33 200,198 242,198 242,322 285,322 285,355 242,355 242,574 285,574 285,606 242,606 242,649 200,649 200,783 242,783 242,859 42,859"],
    ["#d95f9a", "#6a3550", "208,33 368,33 368,157 411,157 411,230 250,230 250,190 208,190"],
    ["#3da38e", "#2c544c", "372,33 828,33 828,64 785,64 785,148 702,148 702,230 660,230 660,272 502,272 502,230 418,230 418,106 372,106"],
    ["#1010c0", "#060640", "835,33 868,33 868,524 702,524 702,566 587,566 587,280 668,280 668,240 710,240 710,198 752,198 752,156 793,156 793,73 835,73"],
    ["#d020d0", "#3d0a3d", "710,532 868,532 868,859 587,859 587,817 544,817 544,776 502,776 502,691 418,691 418,658 587,658 587,574 710,574"],
    ["#144a60", "#061a24", "208,658 248,658 248,700 292,700 292,658 411,658 411,700 494,700 494,826 578,826 578,859 250,859 250,776 208,776"]
];

function arrow(x, y, turn, color) {
    return `<path transform="translate(${x} ${y}) rotate(${turn})" d="M-2-12H2V-3H11V1H8L0 10L-8 1H-11V-3H-2z" fill="${color}" opacity=".9"/>`;
}

function box(x, y, size, fill) {
    return `<rect x="${x - size / 2}" y="${y - size / 2}" width="${size}" height="${size}" fill="${fill}"/>`;
}

function hex(x, y) {
    return `<path transform="translate(${x} ${y})" d="M0-19L17-10V10L0 19L-17 10V-10z" fill="#99ccff"/>`;
}

function drawPin(kind, x, y) {
    const dot = `<circle cx="${x}" cy="${y}" r="18" fill="#858585"/>`;
    switch (kind) {
        case "g": return box(x, y, 34, "#858585");
        case "o": return dot;
        case "w": return hex(x, y);
        case "R": return hex(x, y) + `<rect x="${x - 13}" y="${y - 8}" width="26" height="15" fill="#e09860" stroke="#a87850" stroke-width="2"/>`;
        case "G": return box(x, y, 38, "#000") + arrow(x, y, 0, "#336b1c");
        case "V": return box(x, y, 38, "rgba(0,0,0,.4)") + arrow(x, y, -90, "#b03038");
        case "K": return arrow(x, y, -90, "#777");
        case "B": return dot + arrow(x, y, -90, "#1a1aff");
        case "X": return box(x, y, 34, "#505050") + `<path d="M${x - 9} ${y - 12}l18 24m0-24l-18 24" stroke="#707070" stroke-width="2"/>`;
        case "W": return `<rect x="${x - 17}" y="${y - 11}" width="34" height="22" fill="#fff"/><path d="M${x - 8} ${y}h16" stroke="#bbb" stroke-width="3"/>`;
        case "F": return box(x, y, 42, "#a0547a") + box(x, y, 31, "#ff6a00");
        case "P": return box(x, y, 42, "#a0547a") + box(x, y, 30, "#3d1828") + arrow(x, y, -90, "#b03038");
        case "L": return box(x, y, 42, "#a0547a") + box(x, y, 30, "#3d1828") + arrow(x, y, 0, "#336b1c");
        default: return box(x, y, 42, "#a0547a") + box(x, y, 32, "#3d1828") + `<text x="${x}" y="${y + 11}">${kind}</text>`;
    }
}

let out = "";
banks.forEach(b => out += `<polygon points="${b[2]}" fill="${b[1]}"/>`);
for (let i = 0; i <= 20; i++) {
    const p = 38 + i * 41.8;
    out += `<path d="M${p} 31V862M40 ${p - 11}H872" stroke="rgba(160,150,170,.35)" stroke-width="3"/>`;
}
pins.forEach((row, r) => {
    [...row].forEach((kind, c) => out += drawPin(kind, 59 + c * 41.75, 48 + r * 41.8));
});
banks.forEach(b => out += `<polygon points="${b[2]}" fill="none" stroke="${b[0]}" stroke-width="8"/>`);
out += `<rect x="37.5" y="28.5" width="837" height="837" fill="none" stroke="#fff" stroke-width="3"/>`;
document.getElementById("chip").innerHTML = out;
```
